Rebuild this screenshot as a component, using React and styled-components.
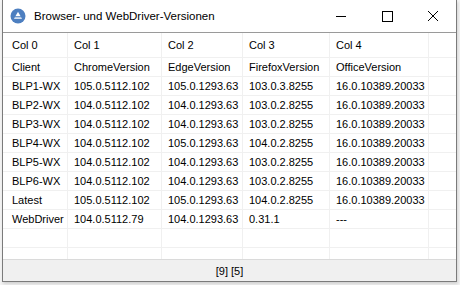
import React from "react";
import styled, { createGlobalStyle } from "styled-components";

const GlobalStyle = createGlobalStyle`
  html, body {
    margin: 0;
    padding: 0;
    background: #f4f4f4;
    font-family: "Liberation Sans", Arial, sans-serif;
  }
`;

const Page = styled.div`
  width: 460px;
  height: 285px;
  overflow: hidden;
  display: flex;
  padding-left: 2px;
  box-sizing: border-box;
`;

const Window = styled.div`
  width: 455px;
  height: 282px;
  box-sizing: border-box;
  border: 1px solid #7b7b7b;
  border-top: none;
  background: #fff;
  display: flex;
  flex-direction: column;
  box-shadow: 1px 2px 3px rgba(0, 0, 0, 0.15);
`;

const TitleBar = styled.div`
  height: 32px;
  flex: none;
  display: flex;
  align-items: center;
  border-bottom: 1px solid #9a9a9a;
  background: #fff;
`;

const AppIcon = styled.svg`
  width: 16px;
  height: 16px;
  margin-left: 7px;
  margin-right: 8px;
  flex: none;
`;

const Title = styled.div`
  font-size: 11.5px;
  color: #000;
  flex: 1;
  white-space: nowrap;
`;

const ControlButton = styled.div`
  width: 46px;
  height: 32px;
  display: flex;
  align-items: center;
  justify-content: center;
`;

const Grid = styled.div`
  flex: 1;
  overflow: hidden;
  display: grid;
  grid-template-columns: 65px 94px 81px 87px 99px 1fr;
  grid-template-rows: 25px;
  grid-auto-rows: 19px;
  align-content: start;
`;

const Row = styled.div`
  display: contents;
`;

const Cell = styled.div`
  box-sizing: border-box;
  border-right: ${p => (p.last ? "none" : "1px solid #f0f0f0")};
  border-bottom: 1px solid #f0f0f0;
  padding-left: ${p => (p.first ? 9 : 6)}px;
  padding-bottom: ${p => (p.head ? 1 : 0)}px;
  font-size: 11px;
  color: #000;
  white-space: nowrap;
  overflow: hidden;
  display: flex;
  align-items: center;
`;

const StatusBar = styled.div`
  height: 22px;
  flex: none;
  background: #f0f0f0;
  border-top: 1px solid #dadada;
  box-sizing: border-box;
  display: flex;
  align-items: center;
  justify-content: center;
  font-size: 11px;
  color: #000;
`;

const headers = ["Col 0", "Col 1", "Col 2", "Col 3", "Col 4"];

const rows = [
  ["Client", "ChromeVersion", "EdgeVersion", "FirefoxVersion", "OfficeVersion"],
  ["BLP1-WX", "105.0.5112.102", "105.0.1293.63", "103.0.3.8255", "16.0.10389.20033"],
  ["BLP2-WX", "104.0.5112.102", "104.0.1293.63", "103.0.2.8255", "16.0.10389.20033"],
  ["BLP3-WX", "104.0.5112.102", "104.0.1293.63", "103.0.2.8255", "16.0.10389.20033"],
  ["BLP4-WX", "104.0.5112.102", "105.0.1293.63", "104.0.2.8255", "16.0.10389.20033"],
  ["BLP5-WX", "104.0.5112.102", "104.0.1293.63", "103.0.2.8255", "16.0.10389.20033"],
  ["BLP6-WX", "104.0.5112.102", "104.0.1293.63", "103.0.2.8255", "16.0.10389.20033"],
  ["Latest", "105.0.5112.102", "105.0.1293.63", "104.0.2.8255", "16.0.10389.20033"],
  ["WebDriver", "104.0.5112.79", "104.0.1293.63", "0.31.1", "---"],
  ["", "", "", "", ""],
  ["", "", "", "", ""],
];

const App = () => {
  return (
    <Page>
      <GlobalStyle />
      <Window>
        <TitleBar>
          <AppIcon viewBox="0 0 16 16">
            <circle cx="8" cy="8" r="7.5" fill="#4d7fc0" />
            <path d="M8 3.8 L12 10.8 L4 10.8 Z" fill="#fff" />
            <rect x="4.5" y="8.2" width="7" height="1.2" fill="#4d7fc0" />
          </AppIcon>
          <Title>Browser- und WebDriver-Versionen</Title>
          <ControlButton>
            <svg width="12" height="12" viewBox="0 0 12 12">
              <line x1="1" y1="6.5" x2="11" y2="6.5" stroke="#000" strokeWidth="1" />
            </svg>
          </ControlButton>
          <ControlButton>
            <svg width="12" height="12" viewBox="0 0 12 12">
              <rect x="1.5" y="1.5" width="10" height="10" fill="none" stroke="#000" strokeWidth="1" />
            </svg>
          </ControlButton>
          <ControlButton>
            <svg width="12" height="12" viewBox="0 0 12 12">
              <path d="M1 1 L11 11 M11 1 L1 11" stroke="#000" strokeWidth="1" />
            </svg>
          </ControlButton>
        </TitleBar>
        <Grid>
          <Row>
            {headers.map((h, i) => (
              <Cell key={h} head first={i === 0}>{h}</Cell>
            ))}
            <Cell head last />
          </Row>
          {rows.map((r, ri) => (
            <Row key={ri}>
              {r.map((c, ci) => (
                <Cell key={ci} first={ci === 0}>{c}</Cell>
              ))}
              <Cell last />
            </Row>
          ))}
        </Grid>
        <StatusBar>[9] [5]</StatusBar>
      </Window>
    </Page>
  );
};

export default App;
